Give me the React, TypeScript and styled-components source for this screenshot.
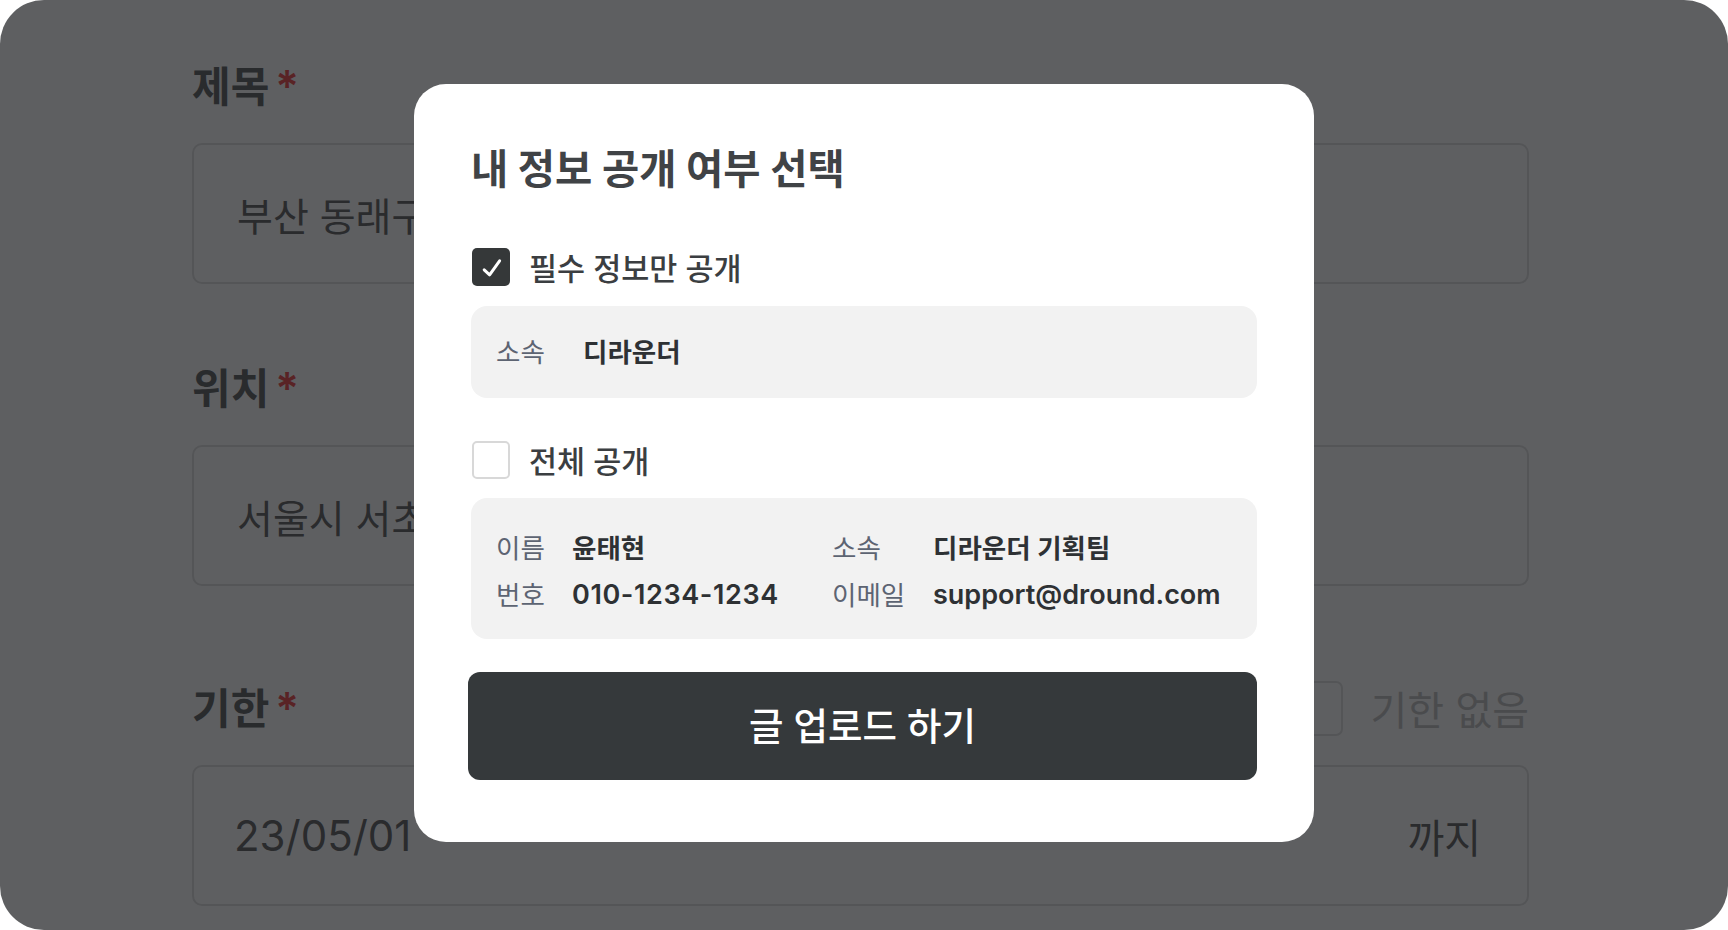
import React from "react";
import styled, { createGlobalStyle } from "styled-components";

const GlobalStyle = createGlobalStyle`
  html, body {
    margin: 0;
    padding: 0;
    background: #ffffff;
  }
  body {
    font-family: "Inter", "Noto Sans CJK KR", sans-serif;
  }
  * {
    box-sizing: border-box;
  }
`;

const Frame = styled.div`
  position: relative;
  width: 1728px;
  height: 930px;
  border-radius: 44px;
  overflow: hidden;
  background: #ffffff;
`;

/* page behind the dialog */
const Form = styled.div`
  width: 1337px;
  margin-left: 192px;
  padding-top: 58px;
`;

const Field = styled.div<{ $top?: number }>`
  margin-top: ${(p) => p.$top ?? 0}px;
`;

const FieldHead = styled.div`
  display: flex;
  align-items: center;
  justify-content: space-between;
  height: 56px;
  margin-bottom: 29px;
`;

const FieldLabel = styled.div`
  font-size: 42px;
  font-weight: 700;
  line-height: 56px;
  color: #565757;
  white-space: nowrap;
`;

const Required = styled.span`
  margin-left: 6px;
  font-size: 44px;
  font-weight: 600;
  color: #ef3d3d;
`;

const NoLimit = styled.label`
  display: flex;
  align-items: center;
  gap: 28px;
  font-size: 40px;
  color: #bebebe;
  white-space: nowrap;
`;

const BigBox = styled.span`
  width: 55px;
  height: 55px;
  border: 2px solid #dedede;
  border-radius: 7px;
  background: #ffffff;
`;

const InputBox = styled.div<{ $size?: number; $pad?: number }>`
  height: 141px;
  border: 2px solid #dedede;
  border-radius: 10px;
  display: flex;
  align-items: center;
  justify-content: space-between;
  padding: 0 46px 0 ${(p) => p.$pad ?? 43}px;
  font-size: ${(p) => p.$size ?? 39}px;
  color: #575757;
  white-space: nowrap;
  overflow: hidden;
`;

const Suffix = styled.span`
  font-size: 40px;
  color: #575757;
`;

/* dialog */
const Overlay = styled.div`
  position: absolute;
  inset: 0;
  background: rgba(22, 23, 26, 0.69);
  display: flex;
  align-items: flex-start;
  justify-content: center;
  padding-top: 84px;
`;

const Modal = styled.div`
  width: 900px;
  padding: 63px 57px 62px;
  border-radius: 32px;
  background: #ffffff;
`;

const Title = styled.h2`
  margin: 0 0 55px;
  font-size: 40.5px;
  font-weight: 700;
  line-height: 46px;
  color: #404346;
  white-space: nowrap;
`;

const CheckRow = styled.label<{ $top?: number }>`
  display: flex;
  align-items: center;
  gap: 19px;
  height: 38px;
  margin: ${(p) => p.$top ?? 0}px 0 0 1px;
  font-size: 30.5px;
  font-weight: 500;
  color: #3b3e41;
  white-space: nowrap;
`;

const Box = styled.span<{ $checked?: boolean }>`
  display: flex;
  align-items: center;
  justify-content: center;
  flex: none;
  width: 38px;
  height: 38px;
  border-radius: 5px;
  background: ${(p) => (p.$checked ? "#353839" : "#ffffff")};
  border: ${(p) => (p.$checked ? "none" : "2px solid #d8d8d8")};
`;

const InfoLine = styled.div`
  display: flex;
  align-items: center;
  height: 92px;
  margin-top: 20px;
  padding: 0 25px;
  border-radius: 16px;
  background: #f2f2f2;
`;

const InfoGrid = styled.div`
  display: grid;
  grid-template-columns: 76px 260px 101px 1fr;
  row-gap: 11px;
  margin-top: 19px;
  padding: 32px 25px 26px;
  border-radius: 16px;
  background: #f2f2f2;
  line-height: 36px;
`;

const InfoLabel = styled.span<{ $width?: number }>`
  ${(p) => (p.$width ? `width: ${p.$width}px;` : "")}
  flex: none;
  font-size: 26.5px;
  font-weight: 400;
  line-height: 36px;
  color: #5d6472;
  white-space: nowrap;
`;

const InfoValue = styled.span<{ $size?: number; $spacing?: number }>`
  font-size: ${(p) => p.$size ?? 26.5}px;
  letter-spacing: ${(p) => p.$spacing ?? 0}px;
  font-weight: 600;
  line-height: 36px;
  color: #2e3134;
  white-space: nowrap;
`;

const SubmitButton = styled.button`
  display: block;
  width: calc(100% + 3px);
  height: 108px;
  margin: 33px 0 0 -3px;
  padding: 0 0 6px;
  border: none;
  border-radius: 12px;
  background: #35393b;
  color: #ffffff;
  font-family: "Inter", "Noto Sans CJK KR", sans-serif;
  font-size: 37.5px;
  font-weight: 500;
`;

const Check = () => (
  <svg width="38" height="38" viewBox="0 0 38 38" fill="none">
    <polyline
      points="12.2,21.8 17.6,26.8 27.6,12.8"
      stroke="#ffffff"
      strokeWidth="3"
      strokeLinecap="round"
      strokeLinejoin="round"
    />
  </svg>
);

export default function App() {
  return (
    <>
      <GlobalStyle />
      <Frame>
        <Form>
          <Field>
            <FieldHead>
              <FieldLabel>
                제목<Required>*</Required>
              </FieldLabel>
            </FieldHead>
            <InputBox>부산 동래구 맛집</InputBox>
          </Field>
          <Field $top={76}>
            <FieldHead>
              <FieldLabel>
                위치<Required>*</Required>
              </FieldLabel>
            </FieldHead>
            <InputBox>서울시 서초구</InputBox>
          </Field>
          <Field $top={94}>
            <FieldHead>
              <FieldLabel>
                기한<Required>*</Required>
              </FieldLabel>
              <NoLimit>
                <BigBox />
                기한 없음
              </NoLimit>
            </FieldHead>
            <InputBox $size={42} $pad={40}>
              23/05/01
              <Suffix>까지</Suffix>
            </InputBox>
          </Field>
        </Form>

        <Overlay>
          <Modal>
            <Title>내 정보 공개 여부 선택</Title>

            <CheckRow>
              <Box $checked>
                <Check />
              </Box>
              필수 정보만 공개
            </CheckRow>
            <InfoLine>
              <InfoLabel $width={87}>소속</InfoLabel>
              <InfoValue>디라운더</InfoValue>
            </InfoLine>

            <CheckRow $top={43}>
              <Box />
              전체 공개
            </CheckRow>
            <InfoGrid>
              <InfoLabel>이름</InfoLabel>
              <InfoValue>윤태현</InfoValue>
              <InfoLabel>소속</InfoLabel>
              <InfoValue>디라운더 기획팀</InfoValue>
              <InfoLabel>번호</InfoLabel>
              <InfoValue $size={27} $spacing={0.6}>
                010-1234-1234
              </InfoValue>
              <InfoLabel>이메일</InfoLabel>
              <InfoValue $size={27}>support@dround.com</InfoValue>
            </InfoGrid>

            <SubmitButton>글 업로드 하기</SubmitButton>
          </Modal>
        </Overlay>
      </Frame>
    </>
  );
}
